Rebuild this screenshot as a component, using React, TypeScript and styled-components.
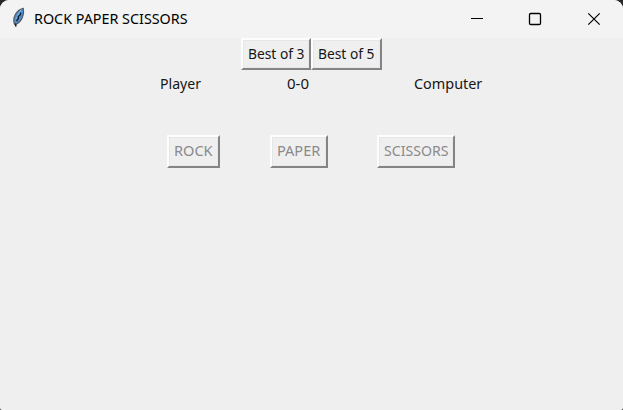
import React from 'react';
import styled, { createGlobalStyle } from 'styled-components';

const GlobalStyle = createGlobalStyle`
  html, body { margin: 0; padding: 0; }
  body { background: #2a2625; overflow: hidden; }
  * { box-sizing: border-box; }
`;

const Window = styled.main`
  width: 623px;
  height: 410px;
  display: flex;
  flex-direction: column;
  overflow: hidden;
  border-radius: 9px 9px 2px 2px;
  background: #efefef;
  font-family: "Noto Sans", "Open Sans", sans-serif;
  font-size: 15px;
  color: #161616;
`;

const TitleBar = styled.header`
  display: flex;
  height: 38px;
  flex: none;
  padding-left: 11px;
  background: #f3f3f3;
`;

const Feather = styled.svg`
  width: 16px;
  height: 22px;
  margin: 7px 7px 0 0;
  flex: none;
`;

const Title = styled.h1`
  margin: 0;
  flex: 1;
  font-size: 15px;
  font-weight: 400;
  line-height: 37px;
  white-space: nowrap;
  color: #000;
`;

const Controls = styled.div`
  display: flex;
`;

const ControlButton = styled.button`
  width: 58.5px;
  height: 38px;
  padding: 0;
  border: 0;
  background: none;
  svg { display: block; }
`;

const Label = styled.span<{ $scale?: number }>`
  display: block;
  white-space: nowrap;
  transform: scaleX(${p => p.$scale ?? 1});
  transform-origin: 0 50%;
`;

const Modes = styled.div`
  display: flex;
  margin-left: 241px;
  height: 32px;
  flex: none;
`;

const Button = styled.button<{ $width: number; $height?: number }>`
  width: ${p => p.$width}px;
  height: ${p => p.$height ?? 33}px;
  padding: 0 0 3px 5px;
  border: 2px solid;
  border-color: #fdfdfd #848484 #848484 #fdfdfd;
  background: #efefef;
  box-shadow: inset 1px 1px #e6e6e6, inset -1px -1px #e9e9e9;
  font: inherit;
  line-height: 26px;
  text-align: left;
  color: #161616;
  &:disabled { color: #8a8a8a; }
`;

const Scores = styled.div`
  display: grid;
  grid-template-columns: 127px 127px 100px;
  padding-left: 160px;
  height: 28px;
  line-height: 27px;
  flex: none;
`;

const Moves = styled.div`
  display: grid;
  grid-template-columns: 103px 107px 90px;
  margin: 37px 0 0 167px;
`;

export default function App() {
  return (
    <>
      <GlobalStyle />
      <Window>
        <TitleBar>
          <Feather viewBox="0 0 16 22">
            <path d="M3.4 17C1.2 10.5 5 3.2 12.3 1.3C13.8 7.5 10.8 14.5 5.3 17.2Z" fill="#4f8dcc" stroke="#56585b" strokeWidth="1.1" />
            <path d="M5 12.5L10 3" fill="none" stroke="#82b5e6" strokeWidth="1.4" />
            <path d="M5.5 14L7.3 11.2V9.5L9.5 7.5V5.5" fill="none" stroke="#121c2b" strokeWidth="1.4" />
            <path d="M4.2 16.5L5 19.5" fill="none" stroke="#222" strokeWidth="1.6" />
          </Feather>
          <Title><Label $scale={0.955}>ROCK PAPER SCISSORS</Label></Title>
          <Controls>
            <ControlButton aria-label="Minimize">
              <svg width="58" height="38"><path d="M23 18.5h12" stroke="#000" /></svg>
            </ControlButton>
            <ControlButton aria-label="Maximize">
              <svg width="58" height="38"><rect x="23.5" y="13.5" width="11" height="11" rx="1.2" fill="none" stroke="#000" strokeWidth="1.3" /></svg>
            </ControlButton>
            <ControlButton aria-label="Close">
              <svg width="58" height="38"><path d="M23.3 13.3l11.4 11.4m0-11.4l-11.4 11.4" stroke="#000" strokeWidth="1.2" /></svg>
            </ControlButton>
          </Controls>
        </TitleBar>
        <Modes>
          <Button $width={70} $height={32}><Label $scale={0.92}>Best of 3</Label></Button>
          <Button $width={71} $height={32}><Label $scale={0.92}>Best of 5</Label></Button>
        </Modes>
        <Scores>
          <Label $scale={0.94}>Player</Label>
          <Label>0-0</Label>
          <Label $scale={0.96}>Computer</Label>
        </Scores>
        <Moves>
          <Button $width={53} disabled><Label $scale={0.97}>ROCK</Label></Button>
          <Button $width={58} disabled><Label $scale={0.97}>PAPER</Label></Button>
          <Button $width={78} disabled><Label $scale={0.94}>SCISSORS</Label></Button>
        </Moves>
      </Window>
    </>
  );
}
